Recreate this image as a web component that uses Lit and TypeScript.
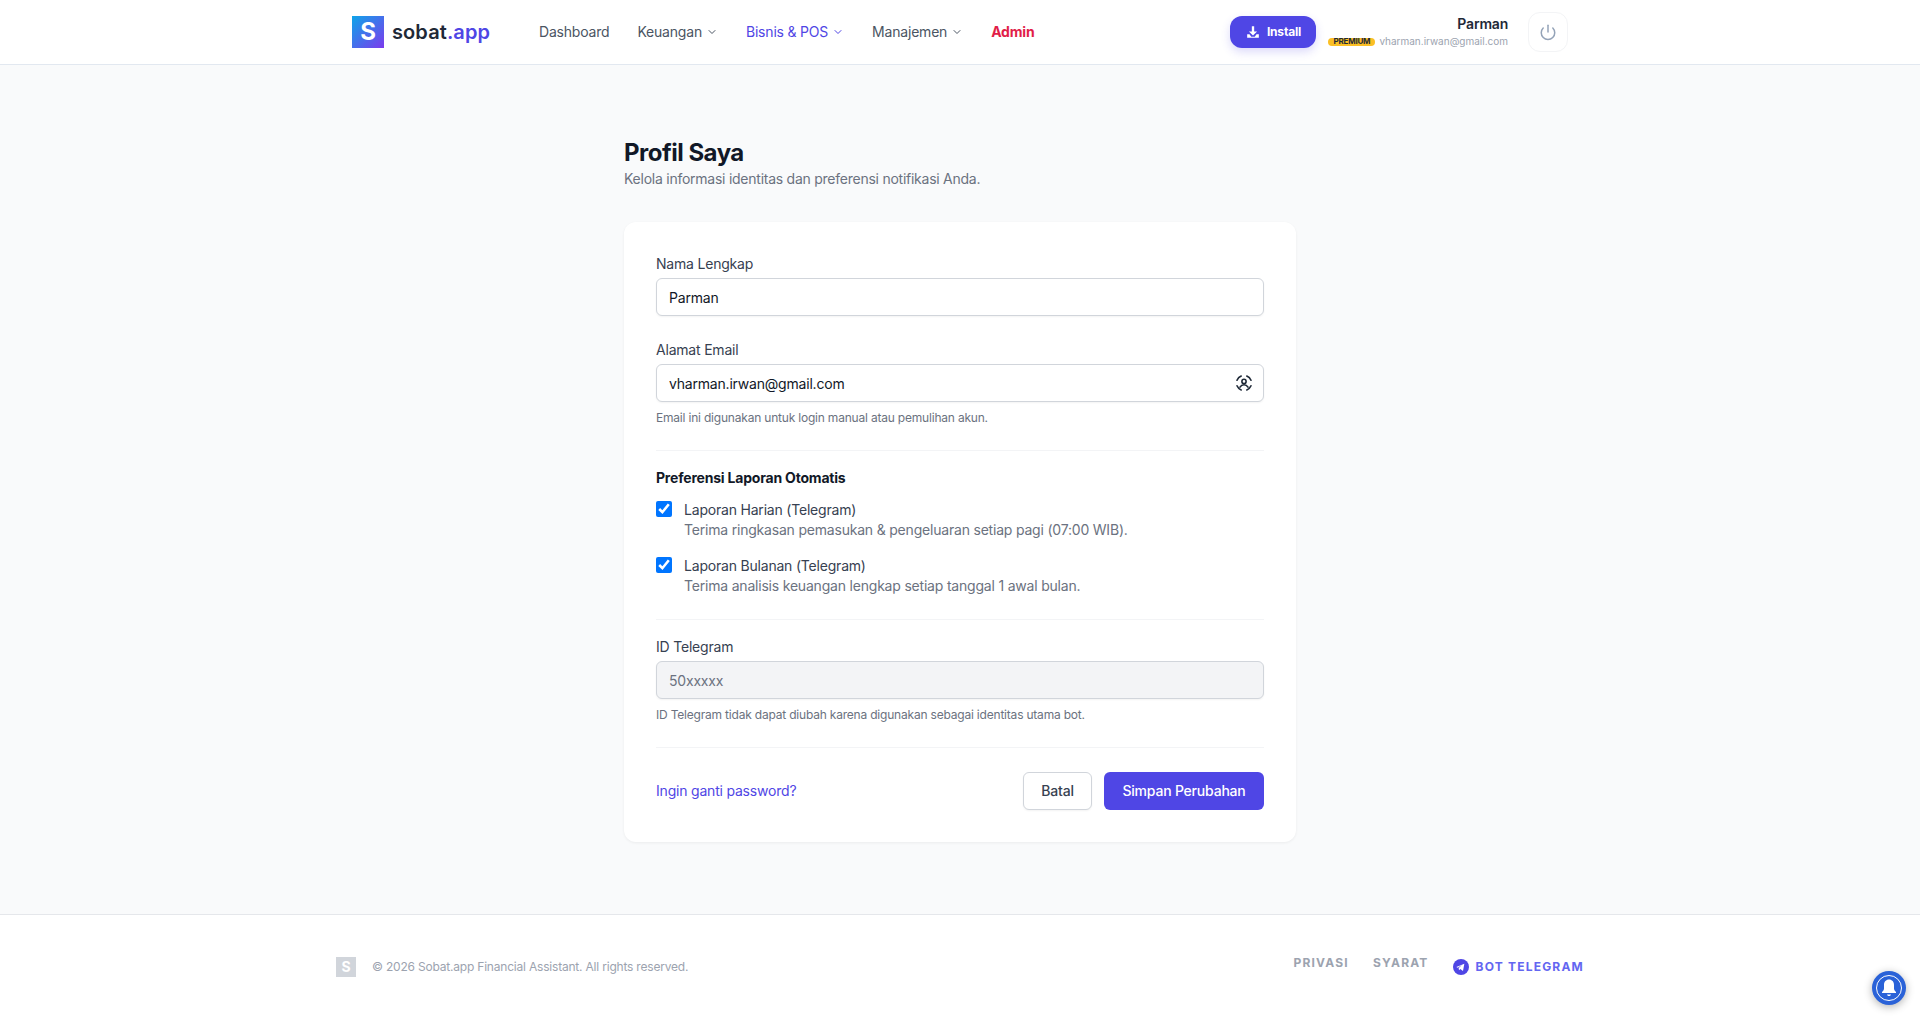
import { LitElement, css, html, svg } from 'lit';
import { customElement } from 'lit/decorators.js';

const chevron = svg`<path d="M6 9l6 6 6-6" />`;

@customElement('app-root')
export class AppRoot extends LitElement {
	static styles = css`
		:host {
			display: flex;
			flex-direction: column;
			min-height: 100vh;
			background: #f9fafb;
			color: #111827;
			font-family: Inter, 'Noto Sans', sans-serif;
			font-size: 14px;
			line-height: 20px;
			letter-spacing: -0.2px;
		}

		* {
			box-sizing: border-box;
		}

		header {
			height: 65px;
			flex: none;
			background: #fff;
			border-bottom: 1px solid #e2e8f0;
			padding: 0 352px;
			display: flex;
			align-items: center;
		}

		.logo {
			width: 32px;
			height: 32px;
			flex: none;
			display: flex;
			align-items: center;
			justify-content: center;
			background: linear-gradient(135deg, #0ea5e9, #7c3aed);
			color: #fff;
			font-size: 24px;
			font-weight: 700;
			letter-spacing: 0;
		}

		.brand {
			margin-left: 8px;
			width: 102px;
			font-size: 20px;
			font-weight: 600;
			letter-spacing: 0.1px;
			color: #1f2937;
			white-space: nowrap;

			span {
				color: #4f46e5;
			}
		}

		nav {
			margin-left: 45px;
			display: flex;
			align-items: center;
			gap: 28px;
			color: #4b5563;
			white-space: nowrap;

			a {
				display: flex;
				align-items: center;
				gap: 4px;
			}

			svg {
				width: 12px;
				height: 12px;
				fill: none;
				stroke: currentColor;
				stroke-width: 2;
				stroke-linecap: round;
				stroke-linejoin: round;
			}

			.active {
				color: #4f46e5;
			}

			.admin {
				color: #e11d48;
				font-weight: 700;
			}
		}

		.account {
			margin-left: auto;
			display: flex;
			align-items: center;
		}

		.install {
			width: 86px;
			height: 32px;
			display: flex;
			align-items: center;
			justify-content: center;
			gap: 7px;
			background: #4f46e5;
			color: #fff;
			border-radius: 12px;
			font-size: 12px;
			font-weight: 700;
			box-shadow: 0 4px 10px rgba(79, 70, 229, 0.2);

			svg {
				width: 14px;
				height: 14px;
				fill: #fff;
			}
		}

		.user {
			margin-left: 12px;
			display: flex;
			flex-direction: column;
			align-items: flex-end;
			white-space: nowrap;
		}

		.user-name {
			font-size: 14px;
			font-weight: 600;
			color: #1f2937;
			line-height: 20px;
			margin-top: -1px;
		}

		.user-meta {
			display: flex;
			align-items: center;
			gap: 4px;
			font-size: 10px;
			line-height: 15px;
			letter-spacing: 0;
			color: #9ca3af;
		}

		.premium {
			height: 8px;
			padding: 0 5px;
			display: flex;
			align-items: center;
			border-radius: 99px;
			background: #fbbf24;
			color: #1f2937;
			font-size: 8px;
			font-weight: 700;
			letter-spacing: -0.2px;
		}

		.power {
			margin-left: 20px;
			width: 40px;
			height: 40px;
			display: flex;
			align-items: center;
			justify-content: center;
			border: 1px solid #f3f4f6;
			border-radius: 12px;

			svg {
				width: 18px;
				height: 18px;
				fill: none;
				stroke: #94a3b8;
				stroke-width: 2;
				stroke-linecap: round;
			}
		}

		main {
			flex: 1;
			padding: 72px 0;
		}

		.page {
			width: 672px;
			margin: 0 auto;
		}

		h1 {
			margin: 0;
			font-size: 24px;
			line-height: 32px;
			font-weight: 700;
			letter-spacing: -0.5px;
		}

		.lead {
			margin: 0 0 33px;
			color: #6b7280;
			letter-spacing: -0.25px;
		}

		.card {
			background: #fff;
			border-radius: 12px;
			box-shadow: 0 1px 3px rgba(0, 0, 0, 0.06);
			padding: 32px;
			display: flex;
			flex-direction: column;
		}

		label.field {
			display: block;
			color: #374151;
			margin-bottom: 4px;
		}

		.input {
			position: relative;
			height: 38px;
			margin-bottom: 24px;

			input {
				width: 100%;
				height: 100%;
				padding: 0 12px;
				border: 1px solid #d1d5db;
				border-radius: 6px;
				box-shadow: 0 1px 2px rgba(0, 0, 0, 0.05);
				font: inherit;
				letter-spacing: inherit;
				color: #111827;
				background: #fff;
				outline: none;
			}

			input:disabled {
				background: #f3f4f6;
				color: #6b7280;
				-webkit-text-fill-color: #6b7280;
				opacity: 1;
			}

			svg {
				position: absolute;
				right: 11px;
				top: 10px;
				width: 18px;
				height: 18px;
				fill: none;
				stroke: #1f2937;
				stroke-width: 1.6;
				stroke-linecap: round;
			}
		}

		.input.hinted {
			margin-bottom: 8px;
		}

		.hint {
			font-size: 12px;
			line-height: 16px;
			letter-spacing: -0.2px;
			color: #6b7280;
		}

		hr {
			width: 100%;
			margin: 24px 0 16px;
			border: 0;
			border-top: 1px solid #f3f4f6;
		}

		h2 {
			margin: 1px 0 12px;
			font-size: 14px;
			line-height: 20px;
			font-weight: 700;
		}

		.check {
			display: flex;
			gap: 12px;
			margin-bottom: 16px;

			input {
				width: 16px;
				height: 16px;
				margin: 1px 0 0;
				flex: none;
				accent-color: #0075ff;
			}

			.title {
				color: #374151;
			}

			.desc {
				color: #6b7280;
			}
		}

		.prefs-end {
			margin-top: 7px;
			margin-bottom: 17px;
		}

		.actions-rule {
			margin-bottom: 24px;
		}

		.actions {
			display: flex;
			align-items: center;
			gap: 12px;

			a {
				color: #4f46e5;
				margin-right: auto;
			}

			button {
				height: 38px;
				padding: 0 17px;
				border-radius: 6px;
				font: inherit;
				letter-spacing: inherit;
				font-weight: 500;
			}

			.cancel {
				width: 69px;
				padding: 0;
				background: #fff;
				color: #374151;
				border: 1px solid #d1d5db;
				box-shadow: 0 1px 2px rgba(0, 0, 0, 0.05);
			}

			.save {
				width: 160px;
				padding: 0;
				background: #4f46e5;
				color: #fff;
				border: 0;
			}
		}

		footer {
			height: 105px;
			flex: none;
			background: #fff;
			border-top: 1px solid #e5e7eb;
			padding: 0 336px;
			display: flex;
			align-items: center;
			justify-content: space-between;
			font-size: 12px;
			line-height: 16px;
			color: #9ca3af;
		}

		.foot-left {
			display: flex;
			align-items: center;
			gap: 16px;
		}

		.foot-logo {
			width: 20px;
			height: 20px;
			display: flex;
			align-items: center;
			justify-content: center;
			background: #d1d5db;
			color: #fff;
			font-size: 14px;
			font-weight: 700;
		}

		.foot-links {
			display: flex;
			align-items: center;
			gap: 24px;
			font-weight: 700;
			letter-spacing: 1.2px;
			color: #9ca3af;

			a.legal {
				position: relative;
				top: -4px;
			}

			.bot {
				display: flex;
				align-items: center;
				gap: 7px;
				color: #6366f1;
			}

			svg {
				width: 16px;
				height: 16px;
				fill: #4f46e5;
			}
		}

		.bell {
			position: fixed;
			left: 1872px;
			top: 971px;
			width: 34px;
			height: 34px;
			border-radius: 50%;
			background: #2a62d8;
			box-shadow: 0 2px 8px rgba(0, 0, 0, 0.3);
			display: flex;
			align-items: center;
			justify-content: center;

			svg {
				width: 28px;
				height: 28px;
			}
		}
	`;

	render() {
		return html`
			<header>
				<div class="logo">S</div>
				<div class="brand">sobat<span>.app</span></div>
				<nav>
					<a>Dashboard</a>
					<a>Keuangan <svg viewBox="0 0 24 24">${chevron}</svg></a>
					<a class="active">Bisnis &amp; POS <svg viewBox="0 0 24 24">${chevron}</svg></a>
					<a>Manajemen <svg viewBox="0 0 24 24">${chevron}</svg></a>
					<a class="admin">Admin</a>
				</nav>
				<div class="account">
					<div class="install">
						<svg viewBox="0 0 24 24">
							<path d="M10 2h4v9h5l-7 7-7-7h5z" />
							<path d="M2 16h4l3 4h6l3-4h4v6H2z" />
						</svg>
						Install
					</div>
					<div class="user">
						<div class="user-name">Parman</div>
						<div class="user-meta">
							<span class="premium">PREMIUM</span>
							<span>vharman.irwan@gmail.com</span>
						</div>
					</div>
					<div class="power">
						<svg viewBox="0 0 24 24">
							<path d="M12 3v9" />
							<path d="M18.4 6.6a9 9 0 1 1-12.8 0" />
						</svg>
					</div>
				</div>
			</header>
			<main>
				<div class="page">
					<h1>Profil Saya</h1>
					<p class="lead">Kelola informasi identitas dan preferensi notifikasi Anda.</p>
					<div class="card">
						<label class="field">Nama Lengkap</label>
						<div class="input"><input value="Parman" /></div>
						<label class="field">Alamat Email</label>
						<div class="input hinted">
							<input value="vharman.irwan@gmail.com" />
							<svg viewBox="0 0 18 18">
								<path d="M2 6.2A7.8 7.8 0 0 1 6.2 2" />
								<path d="M11.8 2A7.8 7.8 0 0 1 16 6.2" />
								<path d="M16 11.8A7.8 7.8 0 0 1 11.8 16" />
								<path d="M6.2 16A7.8 7.8 0 0 1 2 11.8" />
								<circle cx="9" cy="7.4" r="2.1" />
								<path d="M5 13.2c.9-1.6 2.3-2.4 4-2.4s3.100.8 4 2.400" />
							</svg>
						</div>
						<div class="hint">Email ini digunakan untuk login manual atau pemulihan akun.</div>
						<hr />
						<h2>Preferensi Laporan Otomatis</h2>
						<div class="check">
							<input type="checkbox" checked />
							<div>
								<div class="title">Laporan Harian (Telegram)</div>
								<div class="desc">Terima ringkasan pemasukan &amp; pengeluaran setiap pagi (07:00 WIB).</div>
							</div>
						</div>
						<div class="check">
							<input type="checkbox" checked />
							<div>
								<div class="title">Laporan Bulanan (Telegram)</div>
								<div class="desc">Terima analisis keuangan lengkap setiap tanggal 1 awal bulan.</div>
							</div>
						</div>
						<hr class="prefs-end" />
						<label class="field">ID Telegram</label>
						<div class="input hinted"><input value="50xxxxx" disabled /></div>
						<div class="hint">ID Telegram tidak dapat diubah karena digunakan sebagai identitas utama bot.</div>
						<hr class="actions-rule" />
						<div class="actions">
							<a>Ingin ganti password?</a>
							<button class="cancel">Batal</button>
							<button class="save">Simpan Perubahan</button>
						</div>
					</div>
				</div>
			</main>
			<footer>
				<div class="foot-left">
					<div class="foot-logo">S</div>
					<span>© 2026 Sobat.app Financial Assistant. All rights reserved.</span>
				</div>
				<div class="foot-links">
					<a class="legal">PRIVASI</a>
					<a class="legal">SYARAT</a>
					<a class="bot">
						<svg viewBox="0 0 24 24">
							<circle cx="12" cy="12" r="12" />
							<path d="M5 12l12-5-2 11-4-3-2 2-.5-3.500 5-4.500-6.500 4z" fill="#fff" />
						</svg>
						BOT TELEGRAM
					</a>
				</div>
			</footer>
			<div class="bell">
				<svg viewBox="0 0 28 28">
					<circle cx="14" cy="14" r="12.500" fill="none" stroke="#fff" stroke-width="1" />
					<path
						fill="#fff"
						d="M14 5.500c-3 0-5 2.300-5 5.500v3.500c0 1.500-1 2.500-2 3.500v1h14v-1c-1-1-2-2-2-3.500V11c0-3.200-2-5.500-5-5.500z"
					/>
					<path fill="#fff" d="M12 20.500h4c0 .9-.9 1.500-2 1.500s-2-.6-2-1.500z" />
				</svg>
			</div>
		`;
	}
}
